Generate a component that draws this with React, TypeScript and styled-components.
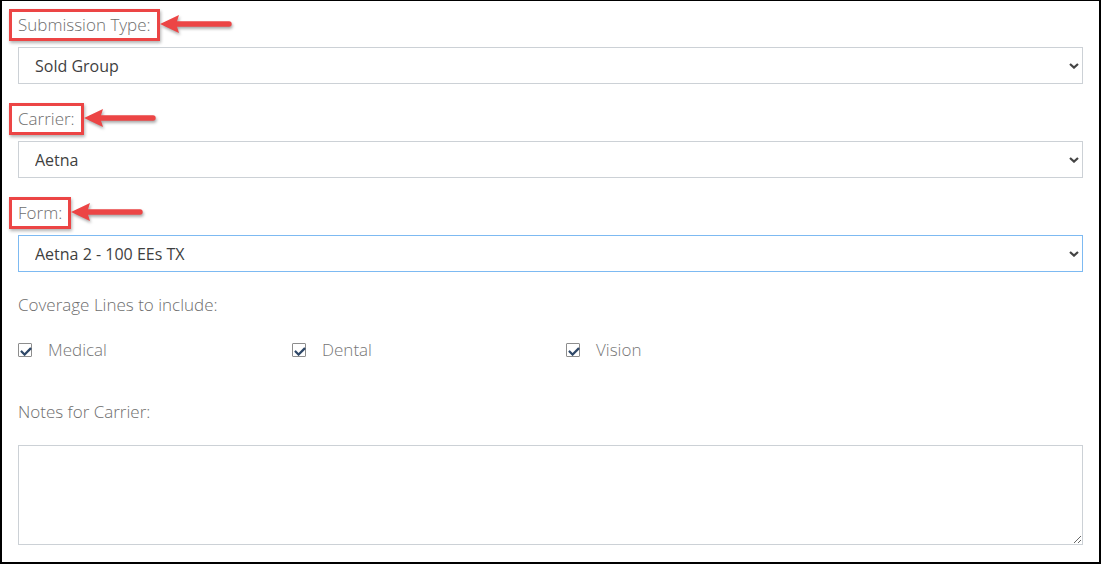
import React from "react";
import styled, { createGlobalStyle } from "styled-components";

const GlobalStyle = createGlobalStyle`
	html, body {
		margin: 0;
		padding: 0;
		background: #fff;
	}
	body {
		font-family: "Open Sans", "Liberation Sans", sans-serif;
	}
`;

const Frame = styled.div`
	width: 1101px;
	height: 564px;
	box-sizing: border-box;
	border: 2px solid #000;
	border-top-width: 1px;
	padding: 14px 16px 0;
	background: #fff;
	overflow: hidden;
`;

const Group = styled.div`
	margin-bottom: 25px;
`;

const Label = styled.div<{ $gap?: number }>`
	font-size: 17px;
	font-weight: 300;
	line-height: 20px;
	color: #6e6e6e;
	margin-bottom: ${(p) => (p.$gap ?? 12)}px;
`;

const Marked = styled.span`
	position: relative;
	display: inline-block;

	&::before {
		content: "";
		position: absolute;
		top: -6px;
		bottom: -6px;
		left: -9px;
		right: -9px;
		border: 3px solid #ec4545;
		box-shadow: 1px 2px 3px rgba(0, 0, 0, 0.3);
	}
`;

const ArrowHolder = styled.svg`
	position: absolute;
	left: calc(100% + 9px);
	top: 50%;
	transform: translateY(-55%);
	overflow: visible;
	filter: drop-shadow(1px 2px 1.5px rgba(0, 0, 0, 0.35));
`;

const SelectWrap = styled.div`
	position: relative;
`;

const Select = styled.select<{ $focus?: boolean }>`
	display: block;
	width: 100%;
	height: 37px;
	box-sizing: border-box;
	appearance: none;
	-webkit-appearance: none;
	border: 1px solid ${(p) => (p.$focus ? "#7dbaf2" : "#ccd1d6")};
	border-radius: 0;
	background: #fff;
	padding: 0 16px;
	font-family: inherit;
	font-size: 16px;
	color: #3f3f3f;
	outline: none;
`;

const Chevron = styled.svg`
	position: absolute;
	right: 4px;
	top: 50%;
	margin-top: -3px;
	pointer-events: none;
`;

const CheckRow = styled.div`
	display: grid;
	grid-template-columns: 274px 274px 274px;
	height: 20px;
	margin: 25px 0 42px;
`;

const CheckItem = styled.label`
	display: flex;
	align-items: center;
	gap: 16px;
	font-size: 17px;
	font-weight: 300;
	line-height: 20px;
	color: #767676;
`;

const Box = styled.span`
	position: relative;
	width: 14px;
	height: 14px;
	box-sizing: border-box;
	border: 1px solid #8d8d8d;
	border-radius: 1px;
	background: #fff;
	flex: none;

	svg {
		position: absolute;
		left: 1px;
		top: 1.5px;
	}
`;

const Notes = styled.textarea`
	display: block;
	width: 100%;
	height: 100px;
	box-sizing: border-box;
	border: 1px solid #ccd1d6;
	border-radius: 0;
	margin-top: 23px;
	font-family: inherit;
	font-size: 16px;
	outline: none;
`;

const Arrow = () => (
	<ArrowHolder width="72" height="20" viewBox="0 0 72 20">
		<path d="M0 10 L19 1 L17 7.3 L69 7.3 A2.7 2.7 0 0 1 69 12.7 L17 12.7 L19 19 Z" fill="#ec4545" />
	</ArrowHolder>
);

const Down = () => (
	<Chevron width="10" height="6" viewBox="0 0 10 6">
		<path d="M1 1 L5 4.6 L9 1" fill="none" stroke="#444" strokeWidth="2.2" />
	</Chevron>
);

const Check = () => (
	<svg width="12" height="10" viewBox="0 0 512 450">
		<path
			d="M173.9 439.4l-166.4-166.4c-10-10-10-26.2 0-36.2l36.2-36.2c10-10 26.2-10 36.2 0L192 312.7 432.1 72.6c10-10 26.2-10 36.2 0l36.2 36.2c10 10 10 26.2 0 36.2L210.1 439.4c-10 10-26.2 10-36.2 0z"
			fill="#2f4868"
		/>
	</svg>
);

const Field = ({ label, value, focus }: { label: string; value: string; focus?: boolean }) => (
	<Group>
		<Label>
			<Marked>
				{label}
				<Arrow />
			</Marked>
		</Label>
		<SelectWrap>
			<Select $focus={focus} defaultValue={value}>
				<option>{value}</option>
			</Select>
			<Down />
		</SelectWrap>
	</Group>
);

const lines = ["Medical", "Dental", "Vision"];

export default function App() {
	return (
		<>
			<GlobalStyle />
			<Frame>
				<Field label="Submission Type:" value="Sold Group" />
				<Field label="Carrier:" value="Aetna" />
				<Field label="Form:" value="Aetna 2 - 100 EEs TX" focus />
				<Label style={{ marginTop: -2 }} $gap={0}>
					Coverage Lines to include:
				</Label>
				<CheckRow>
					{lines.map((l) => (
						<CheckItem key={l}>
							<Box>
								<Check />
							</Box>
							{l}
						</CheckItem>
					))}
				</CheckRow>
				<Label $gap={0}>Notes for Carrier:</Label>
				<Notes />
			</Frame>
		</>
	);
}
